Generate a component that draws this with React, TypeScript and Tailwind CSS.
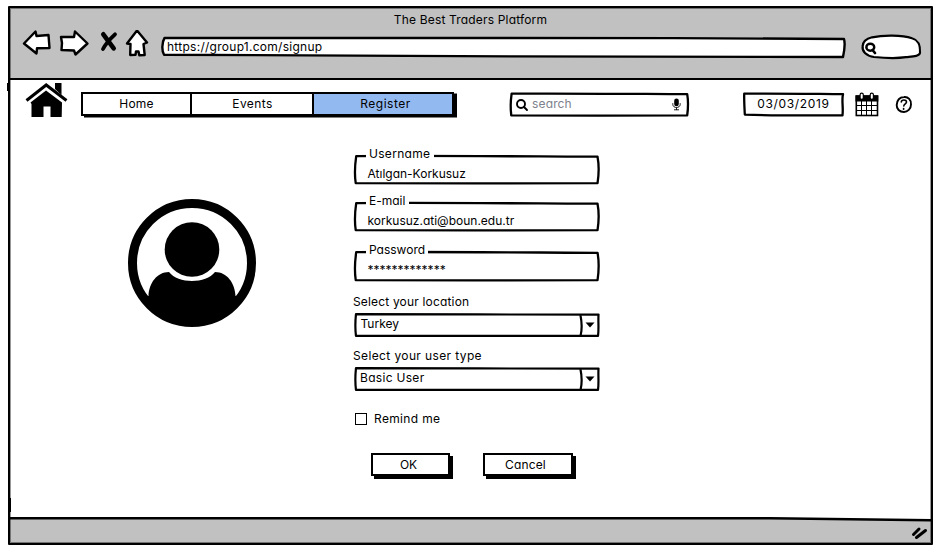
import type { ReactNode } from "react";

/* Hand-drawn outline that stretches over the box it is placed in. */
function Sketch({ d = "M0.9 7C0.4 35 0.2 70 0.7 97C30 99 70 98 99 97C99.6 65 99.6 35 99 9C70 8 30 5 0.9 7Z", width = 2.3 }: { d?: string; width?: number }) {
  return (
    <svg className="pointer-events-none absolute inset-0 h-full w-full overflow-visible" viewBox="0 0 100 100" preserveAspectRatio="none" fill="none" stroke="black" strokeWidth={width} strokeLinejoin="round">
      <path d={d} vectorEffect="non-scaling-stroke" />
    </svg>
  );
}

function BrowserChrome() {
  return (
    <header className="h-[72px] shrink-0 border-b-[2.5px] border-black bg-[#c1c1c1]">
      <div className="flex h-[22px] items-center justify-center pt-[2px] tracking-[0.17px]">The Best Traders Platform</div>
      <div className="flex h-[34px]">
        <svg className="ml-[10px] h-[34px] w-[132px] shrink-0" viewBox="20 30 132 34" fill="white" stroke="black" strokeWidth="2.4" strokeLinejoin="round" strokeLinecap="round">
          <path d="M24 43.5 35.5 31.5 36.5 36 48.5 35 49.5 48 37 48.3 36.5 53.5Z" />
          <path d="M61 37 74 37 75 31.5 87.5 43.5 75.5 54.5 74 50.5 61.5 50 62 43Z" />
          <path d="M137 30.5 147 42.5 143.5 44 144.7 55 139.3 55.3 138.5 51.5 136 51.5 135.5 54.7 130.2 55 130.5 44 127 43.5Z" />
          <path d="M103.3 34.3 113.7 48.3" strokeWidth="4.6" />
          <path d="M115 34.3C111 38 106 43 103 49" strokeWidth="3.8" />
        </svg>
        <div className="relative mt-[7px] ml-[9px] flex h-[20px] w-[685px] shrink-0 items-center pb-px pl-[6px] tracking-[0.27px]">
          <svg className="absolute inset-0 h-full w-full overflow-visible" viewBox="0 0 685 20" fill="white" stroke="black" strokeWidth="2.4" strokeLinejoin="round">
            <path d="M3.5 1C200 0 450 0.5 683 2C684.5 7 683.5 13 682 20C480 19 200 20 3 17.7C0.5 14 1 5 3.5 1Z" />
          </svg>
          <span className="relative">https://group1.com/signup</span>
        </div>
        <svg className="ml-[13px] h-[34px] w-[64px] shrink-0" viewBox="859 30 64 34" fill="white" stroke="black" strokeWidth="2.2" strokeLinecap="round">
          <path d="M872 37.3C883 35 902 34.9 912 38.3C918 40 920.5 44 920 53C919 56.5 912 56.5 906 57.2C895 58.8 884 58 874 57C866 56 861.7 51 862.7 46C863 41 867 38.5 872 37.3Z" />
          <ellipse cx="870.3" cy="47.2" rx="3.9" ry="3.5" strokeWidth="2.5" />
          <path d="M872.5 50 875 53" strokeWidth="2.7" />
        </svg>
      </div>
    </header>
  );
}

function House() {
  return (
    <svg className="mt-[2px] h-[36px] w-[44px] shrink-0" viewBox="25.5 82 44 36">
      <path d="M31 102.5 46.5 90.5 62.5 102.5 62.2 117H51V106.5H44V117H32V104Z" />
      <path d="M27 100.5 46.7 85 67 100.5" fill="none" stroke="black" strokeWidth="3" />
      <path d="M55.5 83H62V95L55.5 89Z" />
    </svg>
  );
}

function Calendar() {
  return (
    <svg className="mt-[11px] ml-[11px] h-[26px] w-[24px] shrink-0" viewBox="855 91 24 26">
      <rect x="856.3" y="96" width="21.2" height="19.5" fill="white" stroke="black" strokeWidth="1.6" />
      <path d="M855.5 95.5H878.3V101.5H855.5Z" />
      <path d="M861.5 101V115M866.5 101V115M871.5 101V115M856 105.5H878M856 110.5H878" stroke="black" strokeWidth="1" />
      <path d="M861.7 94.7V98M871.8 94.7V98" stroke="black" strokeWidth="4.4" strokeLinecap="round" />
      <path d="M861.7 94.7V97.7M871.8 94.7V97.7" stroke="white" strokeWidth="2" strokeLinecap="round" />
    </svg>
  );
}

function Toolbar() {
  return (
    <div className="flex h-[41px] pl-[15px]">
      <House />
      <nav className="mt-[11.5px] ml-[12px] flex h-[24px] w-[373px] shrink-0 border-2 border-black bg-white shadow-[3px_1.5px_0_black]">
        <span className="flex w-[109px] items-center justify-center border-r-2 border-black tracking-[0.2px]">Home</span>
        <span className="flex w-[122px] items-center justify-center border-r-2 border-black pl-px tracking-[0.4px]">Events</span>
        <span className="flex flex-1 items-center justify-center bg-[#93b9f1] pl-[5px] tracking-[0.5px]">Register</span>
      </nav>
      <div className="relative mt-[12px] ml-[56px] flex h-[24px] w-[179px] shrink-0 items-center bg-white pr-[8px] pl-[5px] text-[#7d818c]">
        <Sketch />
        <svg className="mt-px h-[14px] w-[14px]" viewBox="0 0 14 14" fill="none" stroke="black" strokeWidth="1.9" strokeLinecap="round">
          <circle cx="6" cy="6" r="4" />
          <path d="M9 9 12 12" />
        </svg>
        <span className="ml-[3px] flex-1 pb-[1px] tracking-[0.15px]">search</span>
        <svg className="h-[13px] w-[9px]" viewBox="0 0 9 13">
          <rect x="2.2" y="0.5" width="4.6" height="7.8" rx="2.3" />
          <path d="M0.8 5.2V6.5C1 10.5 8 10.5 8.2 6.5V5.2M4.5 9.5V11.8M2 11.8H7" fill="none" stroke="black" strokeWidth="0.9" />
        </svg>
      </div>
      <div className="relative mt-[12px] ml-[54px] flex h-[24px] w-[101px] shrink-0 items-center justify-center bg-white tracking-[0.65px]">
        <Sketch d="M1.2 7C1 35 1.5 70 1.8 94C30 99 70 98 98.5 97C99.5 65 97.5 35 99 9C70 8 30 5 1.2 7Z" />
        03/03/2019
      </div>
      <Calendar />
      <svg className="mt-[15px] ml-[16px] h-[19px] w-[18px] shrink-0" viewBox="895 95 18 19" fill="none" stroke="black" strokeWidth="1.9" strokeLinecap="round">
        <path d="M904 97C908 96.5 911.5 100 911 104.5C911 109 907.5 112 904 112C899.5 112 896.5 109 896.7 105C897 100.5 899.5 97.2 904 97Z" />
        <path d="M901.3 102C901.5 99.5 906.5 99.3 906.5 102C906.5 104 904 103.7 903.8 106" strokeWidth="1.6" />
        <path d="M903.6 108.7V109" strokeWidth="1.8" />
      </svg>
    </div>
  );
}

function Avatar() {
  return (
    <svg className="mt-[77px] ml-[117px] h-[130px] w-[130px] shrink-0" viewBox="127 198 130 130">
      <circle cx="192" cy="263" r="59.5" fill="white" stroke="black" strokeWidth="9" />
      <circle cx="192" cy="249.5" r="27.3" />
      <path d="M147 296H148.5C149 283 157 272 169 272C178 284 206 284 215 272C227 272 235 283 235.5 296H237C231 312 213 326 192 326C171 326 153 312 147 296Z" />
    </svg>
  );
}

function Field({ label, value, className, labelClass }: { label: string; value: string; className: string; labelClass: string }) {
  return (
    <div className={`relative w-[246px] bg-white pl-[13.5px] ${className}`}>
      <Sketch />
      <span className={`absolute top-[-9px] left-[12px] h-[18px] bg-white pl-[3px] leading-[18px] ${labelClass}`}>{label}</span>
      <div className="pt-[11px] leading-[18px]">{value}</div>
    </div>
  );
}

function Select({ value, className }: { value: string; className: string }) {
  return (
    <div className={`relative flex h-[24px] w-[246px] bg-white ${className}`}>
      <Sketch d="M0.8 5C0.5 35 0.5 70 0.8 95H99.2C99.6 65 99.2 35 99.4 7C70 6 30 6 0.8 5ZM92 6C92.6 35 92.7 70 92.1 95" width={2.2} />
      <span className="flex-1 pt-[2px] leading-[18px]">{value}</span>
      <span className="flex w-[20px] items-center justify-center">
        <svg className="h-[6px] w-[10px]" viewBox="0 0 10 6">
          <path d="M0.5 0.5H9.5L5 5.5Z" />
        </svg>
      </span>
    </div>
  );
}

function Button({ children, className }: { children: ReactNode; className: string }) {
  return (
    <button className={`flex h-[23px] shrink-0 items-center justify-center border-2 border-black bg-white shadow-[3px_3px_0_black] ${className}`}>
      {children}
    </button>
  );
}

function SignupForm() {
  return (
    <form className="ml-[97px] flex w-[250px] flex-col pt-[33px]">
      <Field label="Username" value="Atılgan-Korkusuz" className="h-[30px]" labelClass="w-[68px] tracking-[0.3px]" />
      <Field label="E-mail" value="korkusuz.ati@boun.edu.tr" className="mt-[17px] h-[30px]" labelClass="w-[43px]" />
      <Field label="Password" value="*************" className="mt-[19px] h-[31px]" labelClass="w-[62px]" />
      <label className="mt-[12px] -ml-px h-[18px] leading-[18px] tracking-[0.17px]">Select your location</label>
      <Select value="Turkey" className="mt-[2px] pl-[6.5px]" />
      <label className="mt-[10px] -ml-px h-[18px] leading-[18px] tracking-[0.38px]">Select your user type</label>
      <Select value="Basic User" className="mt-[2px] pl-[6px] tracking-[0.3px]" />
      <label className="mt-[18px] flex h-[20px] items-center tracking-[0.35px]">
        <span className="mr-[7px] ml-px h-[12px] w-[12px] border-[1.6px] border-black" />
        Remind me
      </label>
      <div className="mt-[24px] ml-[17px] flex gap-[33px]">
        <Button className="w-[79px] pr-[4px]">OK</Button>
        <Button className="w-[90px] pr-[5px] tracking-[0.15px]">Cancel</Button>
      </div>
    </form>
  );
}

export default function App() {
  return (
    <div className="h-[547px] w-[941px] overflow-hidden bg-white pt-[6px] pl-[8px] font-['Inter','Liberation_Sans',sans-serif] text-[12px] leading-[18px] text-black [font-feature-settings:'cv11','ss03']">
      <div className="relative flex h-[539px] w-[925px] flex-col rounded-[1px] border-[2.5px] border-black bg-white">
        <div className="pointer-events-none absolute inset-0 z-10 border border-black/40" />
        <span className="absolute top-[75px] left-[-3px] h-[8px] w-[2px] bg-black" />
        <span className="absolute top-[490px] left-[-1px] h-[14px] w-[2px] bg-black" />
        <BrowserChrome />
        <Toolbar />
        <main className="flex min-h-0 flex-1">
          <Avatar />
          <SignupForm />
        </main>
        <footer className="relative flex h-[26px] shrink-0 items-center justify-end bg-[#c1c1c1] pr-[3px]">
          <svg className="absolute top-0 left-0 h-[6px] w-full" viewBox="0 0 921 6" preserveAspectRatio="none">
            <path d="M760 0H921V3L760 1Z" fill="white" />
            <path d="M0 1.2H760L921 3.3" fill="none" stroke="black" strokeWidth="2.4" />
          </svg>
          <svg className="mt-[5px] h-[16px] w-[17px]" viewBox="0 0 17 16" fill="none" stroke="black" strokeWidth="3" strokeLinecap="round">
            <path d="M2.5 9.5 8 4M5.5 12.5 14.5 5.5" />
          </svg>
        </footer>
      </div>
    </div>
  );
}
